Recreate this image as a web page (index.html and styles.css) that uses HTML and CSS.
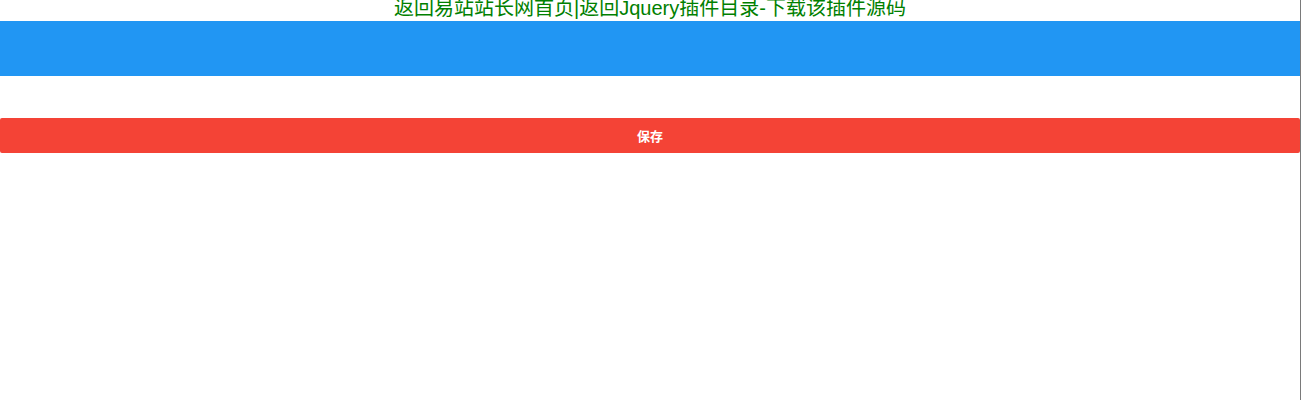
FILE: index.html
```html
<!DOCTYPE html>
<html lang="zh">
<head>
<meta charset="utf-8">
<title>保存</title>
<link rel="stylesheet" href="styles.css">
</head>
<body>
<div class="page">
  <div class="top-links">
    <a class="link" href="#">返回易站站长网首页</a>|<a class="link" href="#">返回Jquery插件目录</a>-<a class="link" href="#">下载该插件源码</a>
  </div>
  <div class="blue-bar"></div>
  <div class="actions">
    <button class="save-btn" type="button">保存</button>
  </div>
</div>
</body>
</html>
```

FILE: styles.css
```css
html, body {
  margin: 0;
  padding: 0;
  background: #fff;
}

body {
  font-family: "Liberation Sans", "Noto Sans CJK SC", sans-serif;
}

.page {
  width: 1300px;
  min-height: 400px;
  border-right: 1px solid #7a7a7a;
}

.top-links {
  height: 21px;
  line-height: 16px;
  font-size: 20px;
  text-align: center;
  color: #008000;
  overflow: visible;
}

.link {
  color: #008000;
  text-decoration: none;
}

.blue-bar {
  height: 55px;
  background: #2196f3;
}

.actions {
  padding-top: 42px;
}

.save-btn {
  display: block;
  width: 100%;
  height: 35px;
  margin: 0;
  padding: 0;
  border: none;
  border-radius: 2px;
  background: #f44336;
  color: #fff;
  font-family: "Liberation Sans", "Noto Sans CJK SC", sans-serif;
  font-size: 13px;
  font-weight: bold;
  cursor: pointer;
}
```
